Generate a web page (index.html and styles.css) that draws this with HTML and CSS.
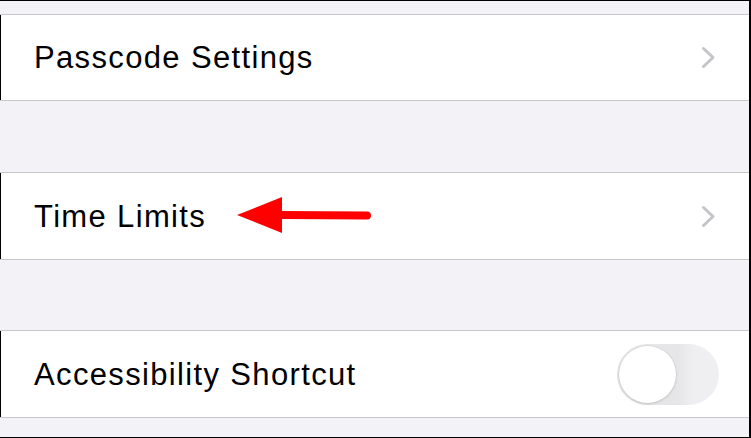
FILE: index.html
```html
<!DOCTYPE html>
<html>
<head>
<meta charset="utf-8">
<link rel="stylesheet" href="styles.css">
</head>
<body>
<div class="screen">
  <div class="gap gap-top"></div>
  <div class="row row-first">
    <span class="label">Passcode Settings</span>
    <svg class="chevron" width="15" height="23" viewBox="0 0 15 23"><path d="M2.5 2.5 L12 11.5 L2.5 20.5" fill="none" stroke="#c4c4c9" stroke-width="3" stroke-linecap="round" stroke-linejoin="round"/></svg>
  </div>
  <div class="gap gap-wide"></div>
  <div class="row">
    <span class="label">Time Limits</span>
    <svg class="arrow" width="140" height="40" viewBox="0 0 140 40"><path d="M0 18 L45 0 L45 14 L130 14.5 A4 4 0 0 1 130 22.5 L45 22 L45 36 Z" fill="#ff0000"/></svg>
    <svg class="chevron" width="15" height="23" viewBox="0 0 15 23"><path d="M2.5 2.5 L12 11.5 L2.5 20.5" fill="none" stroke="#c4c4c9" stroke-width="3" stroke-linecap="round" stroke-linejoin="round"/></svg>
  </div>
  <div class="gap"></div>
  <div class="row">
    <span class="label">Accessibility Shortcut</span>
    <div class="switch"><div class="knob"></div></div>
  </div>
  <div class="gap gap-bottom"></div>
</div>
</body>
</html>
```
FILE: styles.css
```css
html, body {
  margin: 0;
  padding: 0;
  background: #000;
}
.screen {
  width: 749px;
  height: 436px;
  margin-top: 1px;
  display: flex;
  flex-direction: column;
  background: #f2f2f7;
  font-family: "Liberation Sans", Arial, sans-serif;
  overflow: hidden;
}
.gap {
  height: 70px;
  flex: none;
  background: #f2f2f7;
}
.gap-top { height: 13px; }
.gap-wide { height: 71px; }
.row {
  height: 86px;
  flex: none;
  background: #fff;
  border-top: 1px solid #c8c7cc;
  border-bottom: 1px solid #c8c7cc;
  display: flex;
  align-items: center;
  padding: 0 33px 0 34px;
  position: relative;
  box-shadow: inset 1px 0 0 #000;
}
.row-first { height: 85px; }
.label {
  font-size: 31px;
  color: #000;
  letter-spacing: 1.35px;
  flex: 1;
  padding-top: 1px;
}
.chevron {
  display: block;
}
.arrow {
  position: absolute;
  left: 237px;
  top: 24px;
}
.switch {
  width: 102px;
  height: 61px;
  border-radius: 31px;
  background: linear-gradient(90deg, #e6e6e8 0%, #e6e6e8 60%, #efeff1 75%, #efeff1 100%);
  display: flex;
  align-items: center;
  padding-left: 2px;
  box-sizing: border-box;
  margin-right: -3px;
}
.knob {
  width: 57px;
  height: 57px;
  border-radius: 50%;
  background: #fff;
  box-shadow: 0 1px 3px rgba(0,0,0,0.15), 0 0 0 0.5px rgba(0,0,0,0.06);
}
.gap-bottom {
  height: 18px;
  flex: 1;
}
```
